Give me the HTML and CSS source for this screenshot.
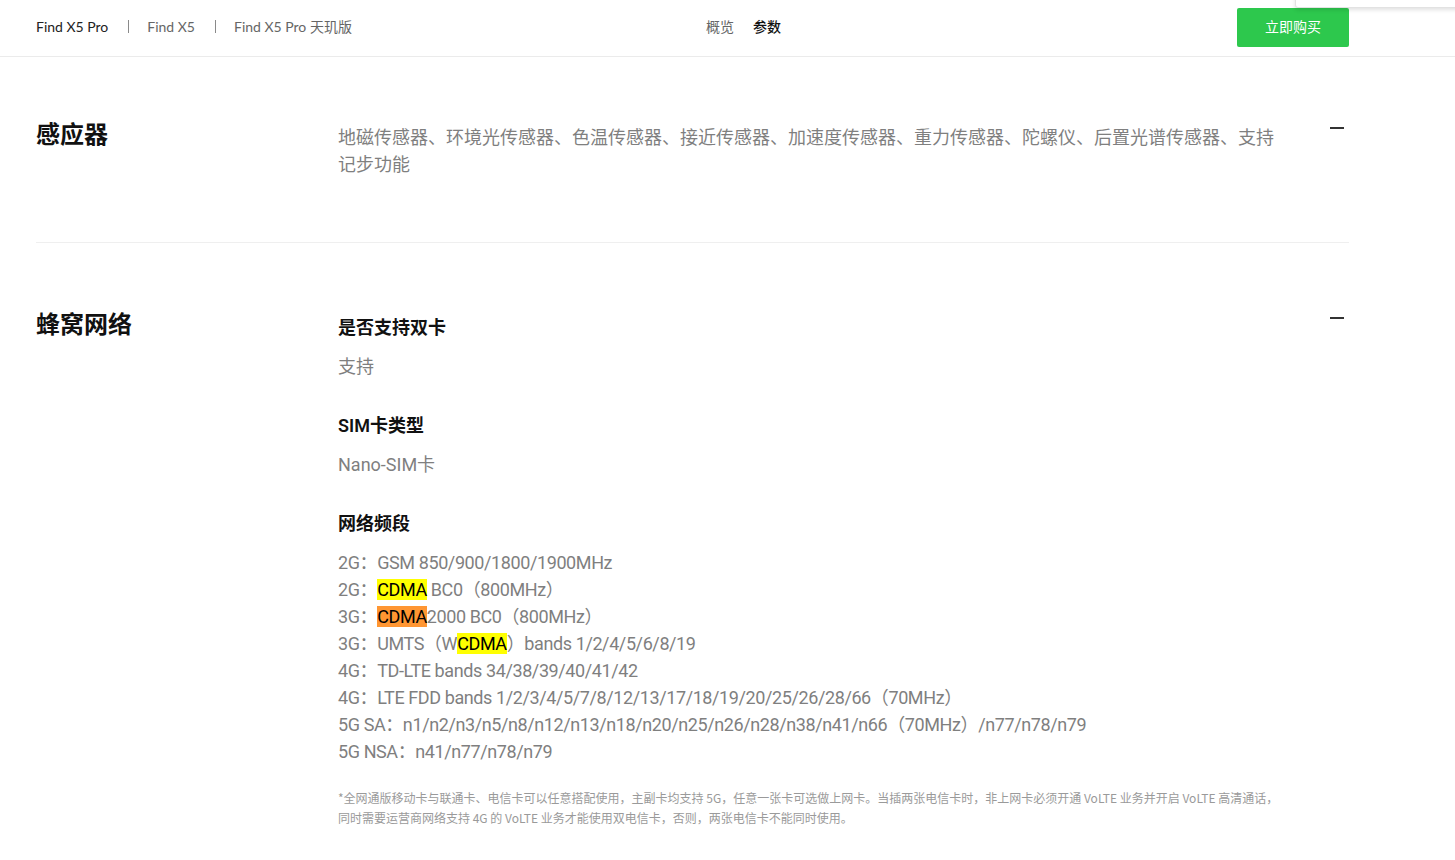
FILE: index.html
```html
<!DOCTYPE html>
<html lang="zh-CN">
<head>
<meta charset="utf-8">
<title>Find X5 Pro 参数</title>
<link rel="stylesheet" href="styles.css">
</head>
<body>
<header class="topbar">
  <div class="topbar-inner">
    <nav class="models">
      <a class="model active">Find X5 Pro</a>
      <span class="sep" aria-hidden="true"></span>
      <a class="model">Find X5</a>
      <span class="sep" aria-hidden="true"></span>
      <a class="model">Find X5 Pro 天玑版</a>
    </nav>
    <nav class="tabs">
      <a class="tab">概览</a>
      <a class="tab current">参数</a>
    </nav>
    <a class="buy">立即购买</a>
  </div>
  <div class="popover"></div>
</header>

<main class="specs">
  <section class="spec">
    <h2 class="spec-title">感应器</h2>
    <div class="spec-body">
      <p class="value">地磁传感器、环境光传感器、色温传感器、接近传感器、加速度传感器、重力传感器、陀螺仪、后置光谱传感器、支持记步功能</p>
    </div>
    <span class="toggle"></span>
  </section>

  <section class="spec">
    <h2 class="spec-title">蜂窝网络</h2>
    <div class="spec-body">
      <div class="item">
        <h3 class="item-title">是否支持双卡</h3>
        <p class="value">支持</p>
      </div>
      <div class="item">
        <h3 class="item-title">SIM卡类型</h3>
        <p class="value">Nano-SIM卡</p>
      </div>
      <div class="item">
        <h3 class="item-title">网络频段</h3>
        <ul class="value bands">
          <li>2G：GSM 850/900/1800/1900MHz</li>
          <li>2G：<mark class="hit">CDMA</mark> BC0（800MHz）</li>
          <li>3G：<mark class="hit now">CDMA</mark>2000 BC0（800MHz）</li>
          <li>3G：UMTS（W<mark class="hit">CDMA</mark>）bands 1/2/4/5/6/8/19</li>
          <li>4G：TD-LTE bands 34/38/39/40/41/42</li>
          <li>4G：LTE FDD bands 1/2/3/4/5/7/8/12/13/17/18/19/20/25/26/28/66（70MHz）</li>
          <li>5G SA：n1/n2/n3/n5/n8/n12/n13/n18/n20/n25/n26/n28/n38/n41/n66（70MHz）/n77/n78/n79</li>
          <li>5G NSA：n41/n77/n78/n79</li>
        </ul>
        <p class="note">*全网通版移动卡与联通卡、电信卡可以任意搭配使用，主副卡均支持 5G，任意一张卡可选做上网卡。当插两张电信卡时，非上网卡必须开通 VoLTE 业务并开启 VoLTE 高清通话，同时需要运营商网络支持 4G 的 VoLTE 业务才能使用双电信卡，否则，两张电信卡不能同时使用。</p>
      </div>
    </div>
    <span class="toggle"></span>
  </section>
</main>
</body>
</html>
```

FILE: styles.css
```css
* { box-sizing: border-box; }

html, body {
  margin: 0;
  padding: 0;
  background: #fff;
}

body {
  font-family: Roboto, "Noto Sans CJK SC", sans-serif;
  color: #000;
  width: 1455px;
  height: 860px;
  overflow: hidden;
}

a { text-decoration: none; cursor: pointer; }

.topbar {
  position: relative;
  height: 57px;
  border-bottom: 1px solid #ebebeb;
}

.topbar-inner {
  display: flex;
  align-items: center;
  height: 52px;
  margin: 0 106px 0 36px;
}

.models {
  display: flex;
  align-items: center;
  font-family: Lato, "Noto Sans CJK SC", sans-serif;
  font-size: 14px;
  color: #666;
}

.model { color: #666; }
.model.active { color: #222; }

.sep {
  width: 1px;
  height: 13px;
  background: #8a8a8a;
  margin: 0 18px 0 20px;
}

.tabs {
  display: flex;
  gap: 19px;
  margin-left: 354px;
  font-size: 14px;
}

.tab { color: #666; }
.tab.current { color: #111; font-weight: 500; }

.buy {
  margin-left: auto;
  margin-top: 2px;
  width: 112px;
  height: 39px;
  line-height: 39px;
  text-align: center;
  background: #2dc84d;
  color: #fff;
  font-size: 14px;
  border-radius: 2px;
}

.popover {
  position: absolute;
  left: 1295px;
  top: -20px;
  width: 200px;
  height: 28px;
  background: #fff;
  border: 1px solid #e2e2e2;
  border-radius: 3px;
  box-shadow: 0 2px 4px rgba(0, 0, 0, 0.12);
}

.specs {
  margin: 0 106px 0 36px;
}

.spec {
  display: grid;
  grid-template-columns: 302px 945px 1fr;
  padding: 64px 0 64px;
  border-bottom: 1px solid #efefef;
}

.spec + .spec {
  padding-top: 68px;
  border-bottom: none;
}

.spec-title {
  margin: 0;
  font-size: 24px;
  line-height: 28px;
  font-weight: 600;
  color: #111;
}

.spec-body {
  padding-top: 3px;
}

.value {
  margin: 0;
  font-size: 18px;
  line-height: 27px;
  color: #7f7f7f;
  padding: 0;
  list-style: none;
}

.bands {
  letter-spacing: -0.4px;
}

.item + .item {
  margin-top: 32px;
}

.item-title {
  margin: 0 0 12px;
  font-size: 18px;
  line-height: 27px;
  font-weight: 600;
  color: #111;
}

.hit {
  background: #ffff00;
  color: #000;
}

.hit.now {
  background: #ff9632;
}

.note {
  margin: 23px 0 0;
  font-family: "Noto Sans CJK SC", sans-serif;
  font-size: 12px;
  line-height: 20px;
  color: #9a9a9a;
}

.toggle {
  justify-self: end;
  width: 14px;
  height: 2px;
  margin: 6px 5px 0 0;
  background: #333;
}
```
